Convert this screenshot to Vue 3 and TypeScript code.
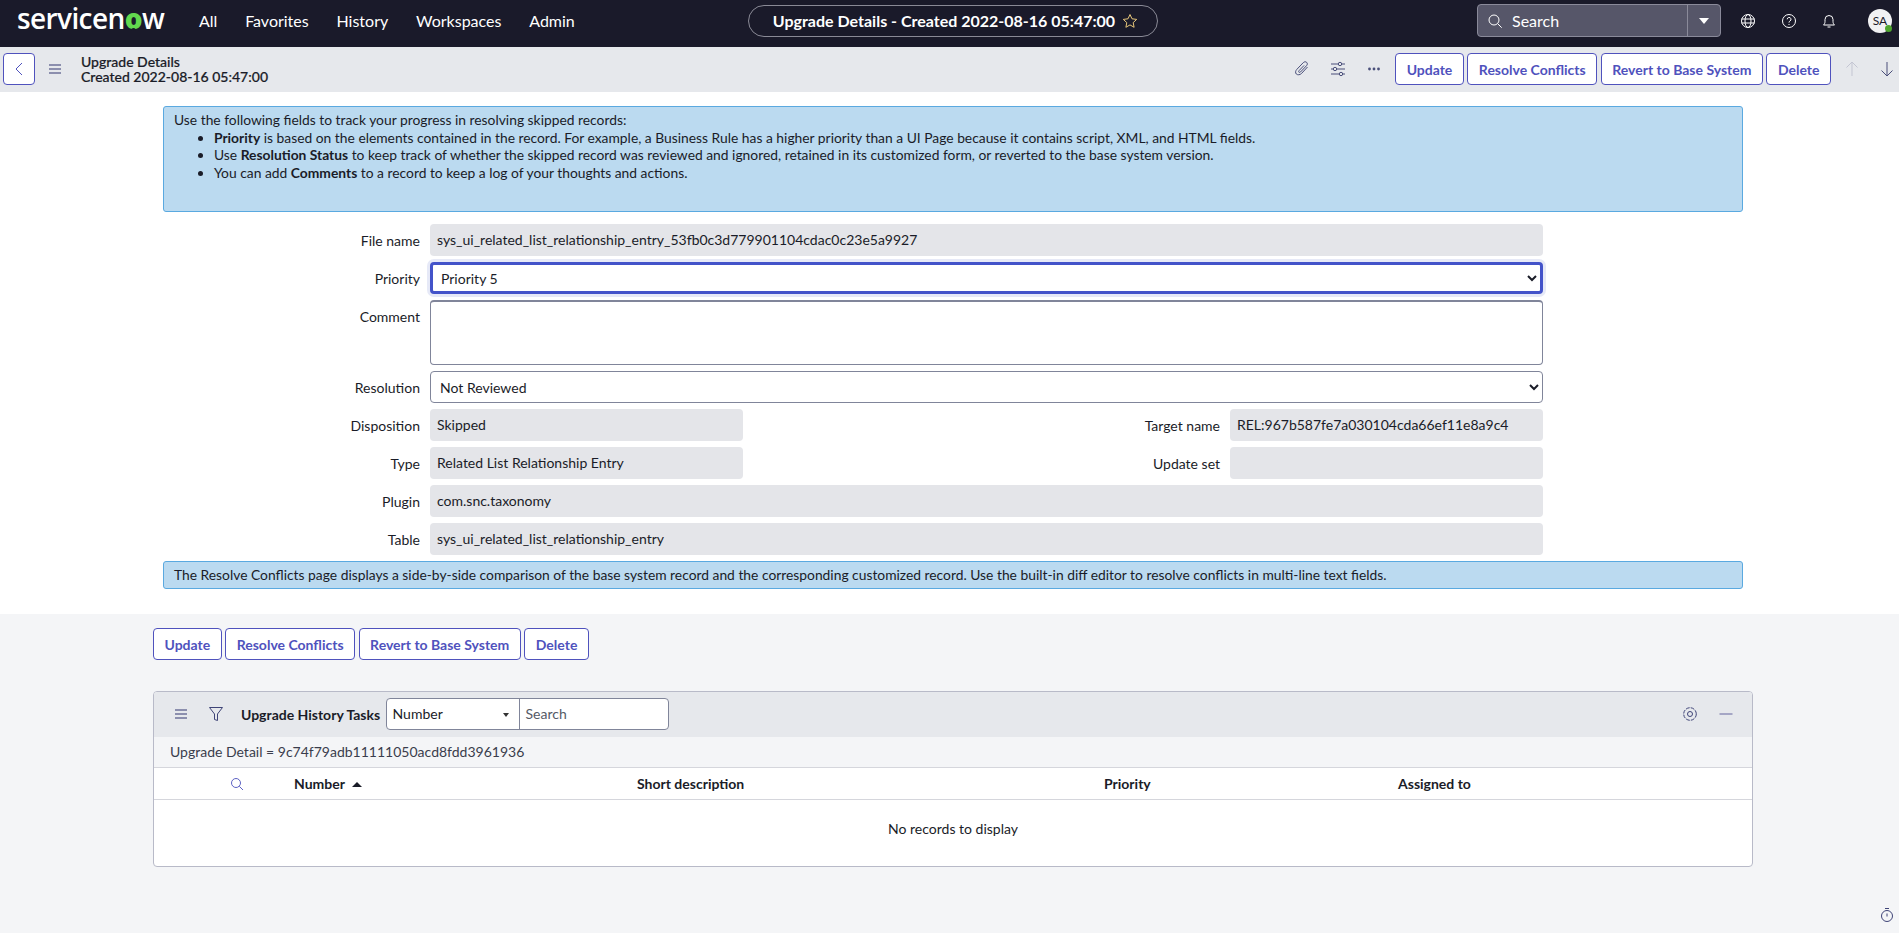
<script setup lang="ts">
const navItems: string[] = ['All', 'Favorites', 'History', 'Workspaces', 'Admin']
const actions: string[] = ['Update', 'Resolve Conflicts', 'Revert to Base System', 'Delete']
const columns: string[] = ['Number', 'Short description', 'Priority', 'Assigned to']
</script>

<template>
  <div class="page">
    <header class="topbar">
      <div class="logo">servicen<span class="logo-o">o</span>w</div>
      <nav class="nav">
        <a v-for="item of navItems" :key="item">{{ item }}</a>
      </nav>
      <div class="pill">
        <span>Upgrade Details - Created 2022-08-16 05:47:00</span>
        <svg width="16" height="16" viewBox="0 0 16 16" fill="none" stroke="#e8c77a" stroke-width="1" stroke-linejoin="round">
          <path d="M8 1.5l2 4.3 4.7.6-3.5 3.2.9 4.7L8 11.9l-4.1 2.4.9-4.7L1.3 6.4 6 5.8z" />
        </svg>
      </div>
      <div class="top-right">
        <div class="global-search">
          <div class="search-field">
            <svg width="16" height="16" viewBox="0 0 16 16" fill="none" stroke="#fff" stroke-width="1">
              <circle cx="7" cy="7" r="5" />
              <path d="M10.7 10.7l4 4" />
            </svg>
            <span>Search</span>
          </div>
          <div class="search-drop"><i></i></div>
        </div>
        <svg class="top-icon" width="16" height="16" viewBox="0 0 16 16" fill="none" stroke="#fff" stroke-width="1">
          <circle cx="8" cy="8" r="6.5" />
          <ellipse cx="8" cy="8" rx="3" ry="6.5" />
          <path d="M1.5 6h13M1.5 10h13" />
        </svg>
        <svg class="top-icon" width="16" height="16" viewBox="0 0 16 16" fill="none" stroke="#fff" stroke-width="1">
          <circle cx="8" cy="8" r="6.5" />
          <path d="M6.2 6.3a1.9 1.9 0 1 1 2.8 1.7c-.7.4-1 .8-1 1.6" />
          <path d="M8 11v1" />
        </svg>
        <svg class="top-icon" width="16" height="16" viewBox="0 0 16 16" fill="none" stroke="#fff" stroke-width="1">
          <path d="M2.5 12h11c-1-1-1.5-2-1.5-3.5v-2a4 4 0 0 0-8 0v2c0 1.5-.5 2.5-1.5 3.5z" />
          <path d="M6.5 14h3" />
        </svg>
        <div class="avatar">SA<i></i></div>
      </div>
    </header>

    <div class="subbar">
      <button class="back-btn" type="button">
        <svg width="10" height="16" viewBox="0 0 10 16" fill="none" stroke="#4f52bd" stroke-width="1">
          <path d="M8 2L2 8l6 6" />
        </svg>
      </button>
      <svg class="menu-icon" width="14" height="12" viewBox="0 0 14 12" fill="none" stroke="#6f7299" stroke-width="1.5">
        <path d="M1 2h12M1 6h12M1 10h12" />
      </svg>
      <div class="sub-title">Upgrade Details<br />Created 2022-08-16 05:47:00</div>
      <div class="sub-actions">
        <svg width="18" height="18" viewBox="0 0 18 18" fill="none" stroke="#4a4f7a" stroke-width="1">
          <path d="M14.5 7l-6 6.5c-1.5 1.5-4 1.7-5.2.5-1.2-1.2-.8-3.2.5-4.6l6.500-6.800c1-1 2.500-1.100 3.400-.2.9.9.8 2.300-.2 3.300l-6 6.300c-.5.5-1.200.6-1.600.2-.4-.4-.3-1 .2-1.600l5-5.200" />
        </svg>
        <svg width="18" height="18" viewBox="0 0 18 18" fill="none" stroke="#4a4f7a" stroke-width="1">
          <path d="M2 4h7M13 4h3M2 9h2M8 9h8M2 14h8M14 14h2" />
          <circle cx="11" cy="4" r="1.7" />
          <circle cx="6" cy="9" r="1.7" />
          <circle cx="12" cy="14" r="1.7" />
        </svg>
        <svg width="18" height="18" viewBox="0 0 18 18" fill="#4a4f7a">
          <circle cx="4.5" cy="9" r="1.4" />
          <circle cx="9" cy="9" r="1.4" />
          <circle cx="13.5" cy="9" r="1.4" />
        </svg>
        <div class="btn-row top-btns">
          <button v-for="action of actions" :key="action" class="action-btn" type="button">{{ action }}</button>
        </div>
        <svg class="first-arrow" width="16" height="18" viewBox="0 0 16 18" fill="none" stroke="#c3c5d2" stroke-width="1">
          <path d="M8 16V2M2.5 7.5L8 2l5.5 5.5" />
        </svg>
        <svg class="last-arrow" width="16" height="18" viewBox="0 0 16 18" fill="none" stroke="#4a4f7a" stroke-width="1">
          <path d="M8 2v14M2.5 10.5L8 16l5.5-5.5" />
        </svg>
      </div>
    </div>

    <main class="main">
      <div class="alert alert-top">
        Use the following fields to track your progress in resolving skipped records:
        <ul>
          <li><b>Priority</b> is based on the elements contained in the record. For example, a Business Rule has a higher priority than a UI Page because it contains script, XML, and HTML fields.</li>
          <li>Use <b>Resolution Status</b> to keep track of whether the skipped record was reviewed and ignored, retained in its customized form, or reverted to the base system version.</li>
          <li>You can add <b>Comments</b> to a record to keep a log of your thoughts and actions.</li>
        </ul>
      </div>

      <form class="form">
        <div class="row">
          <label>File name</label>
          <div class="readonly">sys_ui_related_list_relationship_entry_53fb0c3d779901104cdac0c23e5a9927</div>
        </div>
        <div class="row">
          <label>Priority</label>
          <select class="select focused">
            <option>Priority 5</option>
          </select>
        </div>
        <div class="row">
          <label class="label-top">Comment</label>
          <textarea class="textarea"></textarea>
        </div>
        <div class="row">
          <label>Resolution</label>
          <select class="select">
            <option>Not Reviewed</option>
          </select>
        </div>
        <div class="row-split">
          <div class="row">
            <label>Disposition</label>
            <div class="readonly">Skipped</div>
          </div>
          <div class="row right-half">
            <label>Target name</label>
            <div class="readonly">REL:967b587fe7a030104cda66ef11e8a9c4</div>
          </div>
        </div>
        <div class="row-split">
          <div class="row">
            <label>Type</label>
            <div class="readonly">Related List Relationship Entry</div>
          </div>
          <div class="row right-half">
            <label>Update set</label>
            <div class="readonly"></div>
          </div>
        </div>
        <div class="row">
          <label>Plugin</label>
          <div class="readonly">com.snc.taxonomy</div>
        </div>
        <div class="row">
          <label>Table</label>
          <div class="readonly">sys_ui_related_list_relationship_entry</div>
        </div>
      </form>

      <div class="alert alert-bottom">
        The Resolve Conflicts page displays a side-by-side comparison of the base system record and the corresponding customized record. Use the built-in diff editor to resolve conflicts in multi-line text fields.
      </div>
    </main>

    <section class="lower">
      <div class="btn-row lower-btns">
        <button v-for="action of actions" :key="action" class="action-btn" type="button">{{ action }}</button>
      </div>

      <div class="list">
        <div class="list-head">
          <svg class="list-menu" width="14" height="12" viewBox="0 0 14 12" fill="none" stroke="#6f7299" stroke-width="1.5">
            <path d="M1 2h12M1 6h12M1 10h12" />
          </svg>
          <svg class="list-filter" width="16" height="18" viewBox="0 0 16 18" fill="none" stroke="#3f4477" stroke-width="1">
            <path d="M1.5 2.5h13L9.5 9v6.5l-3-1V9z" />
          </svg>
          <span class="list-title">Upgrade History Tasks</span>
          <div class="list-search">
            <div class="list-select">Number<i></i></div>
            <div class="list-input">Search</div>
          </div>
          <svg class="list-gear" width="16" height="16" viewBox="0 0 16 16" fill="none" stroke="#3f4477" stroke-width="1">
            <circle cx="8" cy="8" r="2.5" />
            <circle cx="8" cy="8" r="6.3" stroke-dasharray="3.8 1.15" />
          </svg>
          <svg class="list-min" width="16" height="16" viewBox="0 0 16 16" fill="none" stroke="#8f91b8" stroke-width="1.5">
            <path d="M1.5 8h13" />
          </svg>
        </div>
        <div class="breadcrumb">Upgrade Detail = 9c74f79adb11111050acd8fdd3961936</div>
        <div class="col-head">
          <div class="col-search">
            <svg width="14" height="14" viewBox="0 0 14 14" fill="none" stroke="#5d62c4" stroke-width="1">
              <circle cx="6" cy="6" r="4.5" />
              <path d="M9.3 9.3l3.7 3.7" />
            </svg>
          </div>
          <div v-for="(col, i) of columns" :key="col">
            {{ col }}<i v-if="i === 0" class="sort"></i>
          </div>
        </div>
        <div class="no-records">No records to display</div>
      </div>
    </section>

    <svg class="timer" width="14" height="16" viewBox="0 0 14 16" fill="none" stroke="#3f4477" stroke-width="1">
      <circle cx="7" cy="9" r="5.5" />
      <path d="M5 1.5h4M7 6.5v3" />
    </svg>
  </div>
</template>

<style>
html,
body {
  margin: 0;
  padding: 0;
  background: #f4f5f7;
}
</style>

<style scoped>
.page {
  position: relative;
  width: 1899px;
  height: 933px;
  overflow: hidden;
  background: #f4f5f7;
  font-family: Lato, 'Liberation Sans', sans-serif;
  font-size: 14px;
  color: #1a1c28;
}

.topbar {
  display: flex;
  align-items: center;
  height: 47px;
  padding-bottom: 6px;
  background: #1a1a2a;
  color: #fff;
  box-sizing: border-box;
}

.logo {
  width: 199px;
  padding-left: 17px;
  box-sizing: border-box;
  font-family: 'Open Sans', sans-serif;
  font-size: 28px;
  font-weight: 600;
  letter-spacing: -0.6px;
  line-height: 1;
  margin-top: -6px;
}

.logo-o {
  position: relative;
  color: #62d84e;
  font-weight: 800;
}

.logo-o::after {
  content: '';
  position: absolute;
  left: 50%;
  bottom: 4px;
  width: 5px;
  height: 5px;
  margin-left: -2.5px;
  border-radius: 50% 50% 0 0;
  background: #1a1a2a;
}

.nav {
  display: flex;
  gap: 27.8px;
  width: 549px;
  font-size: 16px;
}

.pill {
  display: flex;
  align-items: center;
  justify-content: center;
  gap: 7px;
  width: 410px;
  height: 32px;
  padding-left: 5px;
  box-sizing: border-box;
  border: 1px solid #8a8a96;
  border-radius: 16px;
  font-size: 16px;
  font-weight: 700;
}

.top-right {
  display: flex;
  align-items: center;
  margin-left: 319px;
}

.global-search {
  display: flex;
  width: 244px;
  height: 33px;
  box-sizing: border-box;
  background: #565669;
  border: 1px solid #8a8a9a;
  border-radius: 4px;
}

.search-field {
  flex: 1;
  display: flex;
  align-items: center;
  gap: 9px;
  padding-left: 9px;
  font-size: 16px;
  border-right: 1px solid #8a8a9a;
}

.search-drop {
  width: 32px;
  display: flex;
  align-items: center;
  justify-content: center;
}

.search-drop i {
  width: 0;
  height: 0;
  border-left: 5px solid transparent;
  border-right: 5px solid transparent;
  border-top: 6px solid #fff;
}

.top-icon {
  margin-left: 24.5px;
}

.top-icon:first-of-type {
  margin-left: 19px;
}

.avatar {
  position: relative;
  display: flex;
  align-items: center;
  justify-content: center;
  width: 24px;
  height: 24px;
  margin-left: 31px;
  border-radius: 50%;
  background: #f1f1f3;
  color: #1a1a2a;
  font-size: 12px;
}

.avatar i {
  position: absolute;
  right: 0;
  bottom: 1px;
  width: 7px;
  height: 7px;
  border-radius: 50%;
  background: #4ea52e;
}

.subbar {
  display: flex;
  align-items: center;
  height: 45px;
  padding-left: 3px;
  padding-bottom: 1px;
  background: #e6e8ec;
  box-sizing: border-box;
}

.back-btn {
  display: flex;
  align-items: center;
  justify-content: center;
  width: 32px;
  height: 32px;
  padding: 0;
  background: #fff;
  border: 1px solid #4f52bd;
  border-radius: 4px;
}

.menu-icon {
  margin-left: 13px;
}

.sub-title {
  margin-left: 19px;
  margin-top: 1px;
  font-size: 14px;
  font-weight: 500;
  line-height: 14.5px;
  -webkit-text-stroke: 0.2px #1a1c28;
}

.sub-actions {
  display: flex;
  align-items: center;
  gap: 18px;
  margin-left: auto;
  padding-right: 4px;
}

.btn-row {
  display: flex;
  gap: 3.5px;
}

.top-btns {
  margin-left: -6px;
}

.action-btn {
  height: 32px;
  padding: 0 10.5px;
  background: #fff;
  border: 1px solid #4f52bd;
  border-radius: 4px;
  color: #4f52bd;
  font-family: inherit;
  font-size: 14px;
  font-weight: 700;
}

.first-arrow {
  margin-left: -5px;
}

.last-arrow {
  margin-left: 1px;
}

.main {
  height: 522px;
  padding-top: 14px;
  background: #fff;
  box-sizing: border-box;
}

.alert {
  width: 1580px;
  margin-left: 163px;
  box-sizing: border-box;
  background: #bbdaf0;
  border: 1px solid #5aa9e0;
  border-radius: 3px;
  padding: 4px 10px;
  font-size: 13.83px;
  line-height: 17.6px;
}

.alert-top {
  height: 106px;
}

.alert-top ul {
  margin: 0;
  padding-left: 40px;
}

.form {
  display: flex;
  flex-direction: column;
  gap: 6px;
  width: 1380px;
  margin: 12px 0 6px 163px;
}

.row {
  display: grid;
  grid-template-columns: 257px 1fr;
  column-gap: 10px;
  align-items: center;
  min-width: 0;
}

.row label {
  text-align: right;
}

.row .label-top {
  align-self: start;
  padding-top: 8px;
}

.row-split {
  display: grid;
  grid-template-columns: 580px 800px;
}

.right-half {
  grid-template-columns: 477px 313px;
}

.readonly {
  height: 32px;
  line-height: 32px;
  padding-left: 7px;
  box-sizing: border-box;
  background: #e4e5e9;
  border-radius: 4px;
}

.select {
  width: 100%;
  height: 32px;
  padding-left: 5px;
  box-sizing: border-box;
  background: #fff;
  border: 1px solid #80859a;
  border-radius: 4px;
  color: #1a1c28;
  font-family: inherit;
  font-size: 14px;
}

.focused {
  border: 3px solid #4353c9;
  padding-left: 4px;
  box-shadow: 0 0 0 3px #e6e9f7;
}

.textarea {
  display: block;
  width: 100%;
  height: 65px;
  box-sizing: border-box;
  background: #fff;
  border: 1px solid #80859a;
  border-top-width: 2px;
  border-radius: 4px;
  resize: none;
}

.alert-bottom {
  height: 28px;
  padding-top: 4px;
}

.lower {
  padding: 14px 0 0 153px;
}

.lower-btns {
  margin-bottom: 31px;
}

.list {
  width: 1600px;
  height: 176px;
  box-sizing: border-box;
  background: #fff;
  border: 1px solid #b8bac8;
  border-radius: 4px;
  overflow: hidden;
}

.list-head {
  display: flex;
  align-items: center;
  height: 45px;
  padding-bottom: 1px;
  box-sizing: border-box;
  background: #e6e8ec;
}

.list-menu {
  margin-left: 20px;
}

.list-filter {
  margin-left: 20px;
}

.list-title {
  margin-left: 17px;
  font-weight: 700;
}

.list-search {
  display: flex;
  height: 32px;
  margin-left: 5.4px;
  box-sizing: border-box;
  background: #fff;
  border: 1px solid #80859a;
  border-radius: 4px;
}

.list-select {
  position: relative;
  width: 133px;
  line-height: 30px;
  padding-left: 6px;
  box-sizing: border-box;
  border-right: 1px solid #80859a;
}

.list-select i {
  position: absolute;
  right: 10px;
  top: 14px;
  border-left: 3px solid transparent;
  border-right: 3px solid transparent;
  border-top: 4px solid #333;
}

.list-input {
  width: 148px;
  line-height: 30px;
  padding-left: 6px;
  box-sizing: border-box;
  color: #555a66;
}

.list-gear {
  margin-left: auto;
}

.list-min {
  margin: 0 18px 0 20px;
}

.breadcrumb {
  height: 31px;
  line-height: 30px;
  padding-left: 16px;
  background: #f4f5f7;
  border-bottom: 1px solid #d5d6dc;
  box-sizing: border-box;
  color: #3a3d4c;
}

.col-head {
  display: grid;
  grid-template-columns: 140px 343px 467px 294px 1fr;
  align-items: center;
  height: 32px;
  border-bottom: 1px solid #d5d6dc;
  box-sizing: border-box;
  font-weight: 700;
}

.col-search {
  display: flex;
  justify-content: flex-end;
  padding-right: 50px;
}

.col-search svg {
  display: block;
}

.sort {
  display: inline-block;
  margin-left: 7px;
  vertical-align: 2px;
  border-left: 5px solid transparent;
  border-right: 5px solid transparent;
  border-bottom: 5px solid #1a1c28;
}

.no-records {
  text-align: center;
  padding-top: 20px;
  line-height: 18px;
}

.timer {
  position: absolute;
  right: 5px;
  bottom: 10px;
}
</style>
